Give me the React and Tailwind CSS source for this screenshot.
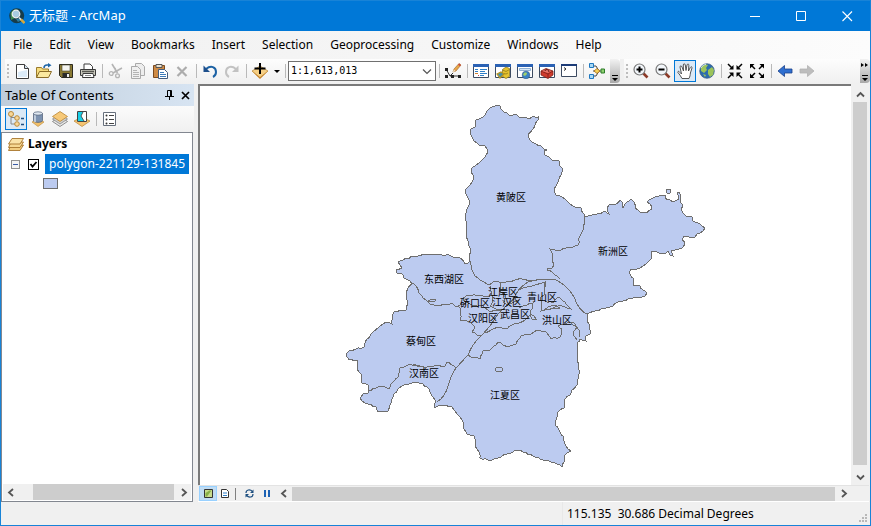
import React, { useState } from 'react';
import { clsx } from 'clsx';

const menuItems = [
  'File', 'Edit', 'View', 'Bookmarks', 'Insert', 'Selection',
  'Geoprocessing', 'Customize', 'Windows', 'Help',
];

const scales = ['1:1,613,013', '1:1,000,000', '1:500,000', '1:100,000', '1:24,000'];

// Outer boundary of all the districts, clockwise from the northern tip
const outline = [
  [497, 105], [500, 106], [501, 109], [504, 112], [507, 113], [509, 115], [512, 116], [514, 114],
  [517, 115], [519, 117], [527, 118], [538, 117], [538, 120], [535, 125], [532, 130], [528, 134],
  [529, 138], [532, 142], [536, 144], [541, 146], [544, 149], [547, 150], [544, 151], [545, 155],
  [549, 157], [552, 160], [559, 161], [560, 166], [563, 169], [561, 175], [557, 184], [554, 189],
  [556, 195], [562, 197], [567, 201], [570, 204], [575, 207], [581, 208], [584, 214], [585, 217],
  [592, 215], [600, 214], [605, 211], [609, 214], [607, 208], [609, 205], [616, 204], [620, 200],
  [622, 202], [623, 208], [627, 202], [631, 199], [634, 202], [635, 208], [640, 212], [647, 213],
  [652, 209], [650, 204], [647, 202], [653, 198], [662, 195], [666, 195], [665, 198], [670, 200],
  [673, 202], [677, 200], [679, 199], [677, 192], [679, 192], [681, 196], [680, 202], [683, 206],
  [681, 209], [683, 213], [687, 217], [692, 217], [693, 221], [700, 224], [705, 228], [703, 231],
  [697, 234], [693, 238], [684, 236], [682, 240], [685, 242], [682, 248], [675, 250], [671, 251],
  [673, 256], [670, 255], [668, 251], [663, 254], [657, 252], [652, 251], [651, 259], [646, 264],
  [640, 268], [631, 269], [630, 274], [634, 279], [634, 286], [640, 286], [643, 290], [647, 293],
  [645, 296], [633, 298], [620, 301], [610, 307], [595, 311], [587, 314], [587, 319], [590, 325],
  [590, 334], [586, 336], [586, 341], [580, 339], [577, 343], [578, 350], [577, 360], [579, 370],
  [578, 384], [572, 390], [570, 395], [565, 399], [564, 408], [558, 412], [555, 425], [560, 432],
  [564, 437], [566, 446], [571, 451], [567, 453], [564, 456], [564, 462], [562, 467], [557, 464],
  [551, 462], [543, 460], [533, 456], [523, 452], [518, 450], [507, 454], [498, 458], [488, 460],
  [480, 458], [479, 452], [475, 446], [474, 436], [467, 434], [463, 428], [463, 422], [457, 414],
  [452, 407], [444, 405], [438, 406], [434, 408], [434, 404], [436, 402], [432, 396], [429, 389],
  [423, 384], [414, 382], [404, 385], [398, 389], [393, 397], [390, 405], [388, 411], [378, 412],
  [376, 407], [365, 403], [360, 398], [363, 394], [368, 393], [368, 385], [362, 383], [361, 374],
  [357, 368], [358, 361], [349, 360], [346, 356], [350, 350], [364, 347], [367, 339], [372, 333],
  [380, 326], [386, 322], [392, 324], [392, 316], [395, 311], [406, 310], [408, 303], [406, 296],
  [408, 288], [412, 284], [410, 281], [404, 278], [401, 273], [397, 273], [396, 270], [402, 268],
  [398, 262], [403, 260], [414, 256], [430, 254], [446, 255], [460, 258], [465, 264], [470, 261],
  [469, 256], [470, 248], [468, 244], [467, 233], [466, 221], [465, 214], [467, 209], [470, 204],
  [467, 196], [465, 190], [469, 186], [473, 180], [473, 175], [471, 169], [479, 163], [485, 157],
  [488, 151], [485, 146], [479, 145], [474, 141], [471, 135], [470, 130], [475, 127], [476, 120],
  [481, 118], [485, 115], [487, 111], [490, 108],
];

// Borders between the districts
const borders = [
  [[585, 217], [583, 230], [580, 236], [578, 245], [573, 247], [566, 248], [560, 251], [555, 250], [550, 249], [552, 253], [552, 260], [554, 265], [551, 269], [547, 268], [547, 270], [553, 273], [560, 279]],
  [[470, 261], [472, 270], [475, 276], [480, 280], [488, 285], [495, 281], [501, 283], [511, 282], [520, 278], [528, 281], [537, 280]],
  [[410, 281], [416, 286], [419, 293], [426, 300], [430, 304], [437, 306], [450, 304], [458, 306], [466, 304], [463, 298], [468, 295], [480, 295], [488, 297], [492, 295], [490, 286]],
  [[428, 301], [432, 299], [436, 300], [434, 302], [428, 302]],
  [[458, 306], [461, 311], [460, 320], [470, 322], [475, 327], [472, 332], [477, 335], [482, 335]],
  [[463, 300], [472, 305], [483, 306], [490, 312], [500, 310], [505, 308]],
  [[492, 295], [493, 301], [490, 306], [496, 309], [502, 311]],
  [[501, 283], [499, 291], [506, 295], [504, 303], [508, 306]],
  [[484, 333], [493, 329], [500, 327], [507, 329], [512, 325], [517, 324], [525, 320], [530, 315], [532, 319], [536, 319], [534, 316], [530, 314], [532, 309], [533, 303], [527, 305], [519, 308]],
  [[468, 355], [474, 358], [480, 359], [483, 351], [490, 350], [498, 342], [508, 347], [516, 344], [521, 336], [531, 334], [537, 330], [545, 331], [551, 339], [560, 337], [562, 329], [558, 326], [570, 322], [573, 325], [577, 327], [573, 333], [577, 340]],
  [[368, 391], [376, 388], [380, 386], [385, 387], [389, 389], [391, 384], [394, 381], [398, 377], [400, 368], [408, 365], [417, 365], [425, 368], [430, 366], [445, 366], [447, 362], [456, 368]],
  [[412, 366], [415, 364], [418, 367], [423, 366], [426, 369]],
  [[545, 283], [544, 295], [541, 297], [541, 311], [550, 309], [560, 305], [565, 307], [571, 309], [565, 302], [558, 297], [553, 303], [545, 301]],
  [[542, 311], [548, 307], [556, 305], [560, 308], [555, 309], [548, 310]],
  [[569, 323], [573, 322], [576, 326], [580, 331], [580, 337]],
];

// The Yangtze and the expressway keep smooth lines
const rivers = [
  'M437 402Q445 397 448 386T456 368L468 355Q472 344 482 335L490 326L498 314L505 307L513 300Q518 288 528 282Q540 278 556 280Q568 286 574 297Q579 311 587 314',
  'M518 290Q524 287 532 286L545 282L545 287',
  'M505 307Q511 300 518 297M498 314L507 305L519 300',
];

const districts = [
  { name: '黄陂区', x: 511, y: 201 },
  { name: '新洲区', x: 613, y: 255 },
  { name: '东西湖区', x: 444, y: 283 },
  { name: '江岸区', x: 503, y: 296 },
  { name: '硚口区', x: 475, y: 307 },
  { name: '江汉区', x: 507, y: 306 },
  { name: '青山区', x: 542, y: 301 },
  { name: '汉阳区', x: 483, y: 322 },
  { name: '武昌区', x: 515, y: 318 },
  { name: '洪山区', x: 557, y: 324 },
  { name: '蔡甸区', x: 421, y: 345 },
  { name: '汉南区', x: 424, y: 377 },
  { name: '江夏区', x: 505, y: 399 },
];

const noise = (n) => {
  const s = Math.sin(n * 127.1) * 43758.5453;
  return (s - Math.floor(s)) * 2 - 1;
};

// Breaks each straight run into short pieces so it reads like a surveyed border
const roughPath = (points, closed) => {
  const list = closed ? [...points, points[0]] : points;
  let d = `M${list[0][0]} ${list[0][1]}`;
  for (let i = 1; i < list.length; i++) {
    const [x1, y1] = list[i - 1];
    const [x2, y2] = list[i];
    const length = Math.hypot(x2 - x1, y2 - y1);
    const steps = Math.max(1, Math.round(length / 3));
    for (let k = 1; k < steps; k++) {
      const t = k / steps;
      const off = noise(x1 * 3 + y1 * 7 + k) * 0.8;
      const x = x1 + (x2 - x1) * t - ((y2 - y1) / length) * off;
      const y = y1 + (y2 - y1) * t + ((x2 - x1) / length) * off;
      d += `L${x.toFixed(1)} ${y.toFixed(1)}`;
    }
    d += `L${x2} ${y2}`;
  }
  return closed ? d + 'Z' : d;
};

const Svg = ({ children, className = 'size-4' }) => (
  <svg viewBox="0 0 16 16" className={clsx('shrink-0', className)} fill="none" aria-hidden="true">
    {children}
  </svg>
);

const icons = {
  new: (
    <Svg>
      <path d="M2.5 1.5h8l4 4v10h-12z" fill="#fff" stroke="#3c3c3c" />
      <path d="M4 9l9-2v7H4z" fill="#dcebf8" />
      <path d="M10.500 1.500v4h4" fill="#d4e3f0" stroke="#3c3c3c" />
    </Svg>
  ),
  open: (
    <Svg>
      <path d="M.5 14.500v-10h5l1 1.500h6v3" fill="#f6dc7c" stroke="#9a7a2c" />
      <path d="M.5 14.500l3-6h12l-3 6z" fill="#fbe9a0" stroke="#8a6c28" />
      <path d="M8 5c0-2 1-3 3-3h2" stroke="#1d64a8" strokeWidth="1.500" />
      <path d="M12 0l3.500 2.300L12 4.600z" fill="#1d64a8" />
    </Svg>
  ),
  save: (
    <Svg>
      <path d="M1.500 1.500h13v13h-11l-2-2z" fill="#8a7a34" stroke="#2c2a20" />
      <path d="M4 2h8v6H4z" fill="#f4f4f0" stroke="#4a4630" strokeWidth=".6" />
      <path d="M4.500 10h7v4.500h-7z" fill="#2b2b2b" />
      <path d="M9 11h2v3H9z" fill="#eee" />
    </Svg>
  ),
  print: (
    <Svg>
      <path d="M4 6V1h6l2.500 2.500V6" fill="#fff" stroke="#3c3c3c" />
      <path d="M.5 6.500h15v6H.5z" fill="#c9c9bd" stroke="#3a3a3a" />
      <path d="M2 8.500h12" stroke="#565650" strokeWidth="1.500" />
      <path d="M3 10.500h10l1 4H2.500z" fill="#fff" stroke="#3a3a3a" />
      <path d="M5 12.500h6" stroke="#888" />
    </Svg>
  ),
  cut: (
    <Svg>
      <path d="M4 1l5.500 9M14 5L5 10M7 5l1 4" stroke="#b4b4b4" strokeWidth="1.600" />
      <circle cx="3.200" cy="10.500" r="1.900" stroke="#b4b4b4" strokeWidth="1.300" />
      <circle cx="9.500" cy="12.700" r="1.900" stroke="#b4b4b4" strokeWidth="1.300" />
    </Svg>
  ),
  copy: (
    <Svg>
      <path d="M5.500.5h6l3 3v9h-9z" fill="#ededed" stroke="#aaa" />
      <path d="M1.500 3.500h6l3 3v9h-9z" fill="#f0f0f0" stroke="#aaa" />
      <path d="M3 7.500h4M3 9.500h6M3 11.500h6M3 13.500h6" stroke="#b4b4b4" />
    </Svg>
  ),
  paste: (
    <Svg>
      <path d="M1.500 2.500h11v12h-11z" fill="#cf8b45" stroke="#7a4a20" />
      <path d="M4 1.500h6v3H4z" fill="#e8e0d0" stroke="#555" />
      <path d="M6.500 6.500h6l3 3v6h-9z" fill="#fff" stroke="#445c7c" />
      <path d="M8 9.500h4M8 11.500h6M8 13.500h6" stroke="#3d7ab8" />
    </Svg>
  ),
  remove: (
    <Svg>
      <path d="M3.500 4l9 9M12.500 4l-9 9" stroke="#acacac" strokeWidth="2.200" />
    </Svg>
  ),
  undo: (
    <Svg>
      <path d="M4 6c5-4 10-2 10 3 0 2-1 4-3 5" stroke="#1d62a4" strokeWidth="2" />
      <path d="M1.500 2.500v6.500h6.500z" fill="#1d4f8c" />
    </Svg>
  ),
  redo: (
    <Svg>
      <path d="M12 6C7 2 2 4 2 9c0 2 1 4 3 5" stroke="#c2c2c2" strokeWidth="2" />
      <path d="M14.500 2.500v6.500H8z" fill="#c2c2c2" />
    </Svg>
  ),
  addData: (
    <Svg>
      <path d="M0 8l8-5 8 5-8 7z" fill="#f5cf85" stroke="#b98534" strokeWidth=".7" />
      <path d="M0 8l8 6 8-6-8 8z" fill="#c8862c" />
      <path d="M8 0v11M2.500 5.500h11" stroke="#000" strokeWidth="2" />
    </Svg>
  ),
  editor: (
    <Svg className="h-4 w-4.5">
      <path d="M1 6l4 7h10M5 13l3-3" stroke="#333" />
      <path d="M0 5h3v3H0zM0 12h3v3H0zM6 12h3v3H6zM13 12h3v3h-3z" fill="#222" />
      <path d="M8 9l1-3 5-5.500L16 2l-5 6z" fill="#e8a648" stroke="#99632a" strokeWidth=".6" />
      <path d="M14 .5L16 2l-1 1.300-2-1.500z" fill="#c94a3c" />
      <path d="M7.500 9.500L9 6.500l1.500 1.500z" fill="#f2dfc2" />
    </Svg>
  ),
  table: (
    <Svg>
      <path d="M.5 1.500h15v13H.5z" fill="#fff" stroke="#3c4a60" />
      <path d="M0 1h16v3H0z" fill="#2b62b4" />
      <path d="M2 6.500h3M7 6.500h7M2 8.500h3M7 8.500h5M7 10.500h7M7 12.500h4" stroke="#2f7fc8" />
      <path d="M2 10.500h3" stroke="#d08030" />
      <path d="M5 12.500h1" stroke="#c44" />
    </Svg>
  ),
  catalog: (
    <Svg>
      <path d="M.5 1.500h15v13H.5z" fill="#fff" stroke="#3c4a60" />
      <path d="M0 1h16v3H0z" fill="#2b62b4" />
      <path d="M7.500 6.500l3.500-2.500 3.500 1.500v8L11 15.500l-3.500-2z" fill="#e6c42e" stroke="#86701a" strokeWidth=".7" />
      <path d="M7.500 7l3.500 1.500 3.500-2M9 10.500l2 .5 2-1" stroke="#86701a" strokeWidth=".7" />
      <path d="M2 11l4-2 3 2-4 4z" fill="#4a90a8" stroke="#b8941c" strokeWidth="1.200" />
    </Svg>
  ),
  search: (
    <Svg>
      <path d="M.5 1.500h15v13H.5z" fill="#fff" stroke="#3c4a60" />
      <path d="M0 1h16v3H0z" fill="#2b62b4" />
      <path d="M2.500 5.500h11v2h-11z" fill="#d8e8f8" stroke="#7aa0c8" strokeWidth=".8" />
      <circle cx="9" cy="12" r="3.800" fill="#3a82c4" stroke="#2c5484" strokeWidth=".6" />
      <path d="M7 10c2-1 3 0 3 1l-2 2-2-1z" fill="#9fd06c" />
    </Svg>
  ),
  toolbox: (
    <Svg>
      <path d="M.5 1.500h15v13H.5z" fill="#fff" stroke="#3c4a60" />
      <path d="M0 1h16v3H0z" fill="#2b62b4" />
      <path d="M2 8l5-2.500 7 2.500v4l-5 3.500L2 12z" fill="#cf3a2c" stroke="#7c2018" strokeWidth=".8" />
      <path d="M2 8l7 3 5-3M9 11v4" stroke="#7c2018" strokeWidth=".8" />
      <path d="M3 8l4-1.800 5.500 1.800L9 10z" fill="#e8756a" />
      <path d="M6 8c0-2 4-2 4 1" stroke="#551410" />
    </Svg>
  ),
  python: (
    <Svg>
      <path d="M.5 1.500h15v12H.5z" fill="#fff" stroke="#3c4a60" />
      <path d="M0 1h16v2H0z" fill="#1d3c78" />
      <path d="M3 4.500l2 1.500-2 1.500" stroke="#222" />
    </Svg>
  ),
  model: (
    <Svg>
      <path d="M4 3h3l3 5M4 8h8M4 13h3l3-5" stroke="#444" />
      <path d="M.5.5h4v4h-4zM.5 11.500h4v4h-4z" fill="#a8d8f4" stroke="#1f78c0" />
      <path d="M5 8l3-2.500L11 8l-3 2.500z" fill="#f7d354" stroke="#a5681c" strokeWidth=".8" />
      <path d="M12 6h3.500v4H12z" fill="#8ed070" stroke="#2c7c28" />
    </Svg>
  ),
  zoomIn: (
    <Svg>
      <path d="M9.500 9.500l5 5" stroke="#8c3a28" strokeWidth="2.600" />
      <circle cx="6.500" cy="6.500" r="5.500" fill="#f2f6fa" stroke="#7a7a7a" strokeWidth="1.200" />
      <path d="M6.500 3.500v6M3.500 6.500h6" stroke="#000" strokeWidth="2" />
    </Svg>
  ),
  zoomOut: (
    <Svg>
      <path d="M9.500 9.500l5 5" stroke="#8c3a28" strokeWidth="2.600" />
      <circle cx="6.500" cy="6.500" r="5.500" fill="#f2f6fa" stroke="#7a7a7a" strokeWidth="1.200" />
      <path d="M3.500 6.500h6" stroke="#000" strokeWidth="2" />
    </Svg>
  ),
  pan: (
    <Svg>
      <path
        d="M5 15.500C4 13 2 11 .8 9.300c0-1.300 1.200-1.300 2 0L4.500 11 3 4c0-1.500 1.500-1.500 2 0l1.500 4L6.300 2c0-1.600 1.700-1.600 2 0L9 7.500 10 2c.4-1.400 2-1.200 1.800.3L11.500 8l1.800-3.500c.7-1.300 2-.7 1.700.5l-1.600 5c-.2 2-.4 3.500-1.400 5.500z"
        fill="#fff"
        stroke="#444"
        strokeWidth=".9"
      />
    </Svg>
  ),
  globe: (
    <Svg>
      <circle cx="8" cy="8" r="7.300" fill="#2d6cae" stroke="#3c5c84" strokeWidth=".7" />
      <path d="M2 4c3-3 6-3 7-2L7 5l1 2-3 3-3-2zM9 7l4-3 2 3-1 5-3 2-2-3zM4 11l3 1-1 2z" fill="#9cc45a" />
      <path d="M2 5c1-2 3-3.500 5-3.500" stroke="#cfe3f4" />
    </Svg>
  ),
  shrink: (
    <Svg>
      <path d="M1 1l4 4M15 1l-4 4M1 15l4-4M15 15l-4-4" stroke="#000" strokeWidth="1.500" />
      <path d="M6.500 6.500H2l4.500-4.500zM9.500 6.500H14L9.500 2zM6.500 9.500H2l4.500 4.500zM9.500 9.500H14L9.500 14z" fill="#000" />
    </Svg>
  ),
  grow: (
    <Svg>
      <path d="M2 2l4 4M14 2l-4 4M2 14l4-4M14 14l-4-4" stroke="#000" strokeWidth="1.500" />
      <path d="M1 1h4.500L1 5.500zM15 1h-4.500L15 5.500zM1 15h4.500L1 10.500zM15 15h-4.500l4.500-4.500z" fill="#000" />
    </Svg>
  ),
  back: (
    <Svg>
      <path d="M1 8l6.500-5.500V6H15v4H7.500v3.500z" fill="#2f6fd0" stroke="#1b3f88" strokeWidth=".8" />
    </Svg>
  ),
  forward: (
    <Svg>
      <path d="M15 8L8.500 2.500V6H1v4h7.500v3.500z" fill="#bdbdbd" stroke="#b2b2b2" strokeWidth=".8" />
    </Svg>
  ),
  drawingOrder: (
    <Svg>
      <path d="M3 4v9h5M3 6.500h6" stroke="#888" />
      <circle cx="3" cy="3" r="2.500" fill="#f7d79a" stroke="#b98a3c" />
      <circle cx="9" cy="7" r="2.300" fill="#f7d79a" stroke="#b98a3c" />
      <circle cx="9" cy="13" r="2.300" fill="#f7d79a" stroke="#b98a3c" />
      <path d="M13 7.500h3M13 13.500h3" stroke="#1f4e80" strokeWidth="1.500" />
    </Svg>
  ),
  source: (
    <Svg>
      <path d="M2 11l6 4.500 6-4.500-6-3z" fill="#f2c069" stroke="#b98534" strokeWidth=".6" />
      <path d="M3.500 2.500v7c0 2.500 9 2.500 9 0v-7z" fill="#7c92b0" stroke="#4c5c74" strokeWidth=".7" />
      <path d="M5 4v7" stroke="#d4deea" strokeWidth="1.500" />
      <ellipse cx="8" cy="2.500" rx="4.500" ry="1.700" fill="#dfe7f0" stroke="#4c5c74" strokeWidth=".7" />
    </Svg>
  ),
  visibility: (
    <Svg>
      <path d="M.5 10.500L8 15.500l7.500-5L8 5z" fill="#e8e8e8" stroke="#777" strokeWidth=".8" />
      <path d="M.5 8L8 13l7.500-5L8 3z" fill="#cfcfcf" stroke="#888" strokeWidth=".8" />
      <path d="M.5 5.500L8 10.500l7.500-5L8 .5z" fill="#f7c978" stroke="#b98534" strokeWidth=".8" />
    </Svg>
  ),
  selection: (
    <Svg>
      <path d="M0 10l8 5.500 8-5.500-8-4z" fill="#f5c572" stroke="#b98534" strokeWidth=".7" />
      <path d="M3.500.5h9v10h-9z" fill="#fff" stroke="#444" />
      <path d="M4 1h5L7 5l3 5H4z" fill="#19cfe6" />
      <path d="M9 1L7 5l3 5" stroke="#333" strokeWidth=".8" />
    </Svg>
  ),
  options: (
    <Svg>
      <path d="M1.500 1.500h12v13h-12z" fill="#fff" stroke="#666f7c" />
      <path d="M7 4.500h5M7 8.500h5M7 12.500h5" stroke="#444" />
      <circle cx="4.500" cy="4.500" r="1" fill="#333" />
      <circle cx="4.500" cy="8.500" r="1" fill="#333" />
      <circle cx="4.500" cy="12.500" r="1" fill="#333" />
    </Svg>
  ),
  layers: (
    <Svg>
      <path d="M3 9h12.500L12 14.500H.5z" fill="#f2cd80" stroke="#a8762c" strokeWidth=".9" />
      <path d="M3 6h12.500L12 11.500H.5z" fill="#f6d892" stroke="#a8762c" strokeWidth=".9" />
      <path d="M4 2.500h11.500L12 8H.5z" fill="#fae3a8" stroke="#a8762c" strokeWidth=".9" />
    </Svg>
  ),
  appLogo: (
    <Svg>
      <circle cx="7.700" cy="7.700" r="7.500" fill="#173c4a" />
      <path d="M1.500 5c2-4 6-4 8-3L6 10l-4 2z" fill="#3f8a50" />
      <path d="M7 11l5-1 1 2-4 2z" fill="#2c7a9c" />
      <path d="M10 9.500l3 3" stroke="#e8e8e8" strokeWidth="1.500" />
      <path d="M12 11.500l3.500 3.500" stroke="#d6a83c" strokeWidth="2.500" />
      <circle cx="7" cy="6" r="3.800" fill="#a8cce0" stroke="#f0f0f0" strokeWidth="1.200" />
    </Svg>
  ),
};

const ToolButton = ({ icon, label, active, onClick }) => (
  <button
    type="button"
    title={label}
    aria-label={label}
    onClick={onClick}
    className={clsx(
      'flex size-5.5 shrink-0 items-center justify-center border',
      active ? 'border-[#0078d7] bg-[#dbe9f6]' : 'border-transparent hover:bg-[#dbe9f6]'
    )}
  >
    {icons[icon]}
  </button>
);

const Separator = () => (
  <div className="flex w-1.5 shrink-0 justify-center">
    <div className="h-3.5 w-px bg-[#b9b9b9]" />
  </div>
);

const Grip = () => (
  <div className="flex w-1.5 shrink-0 flex-col items-center gap-0.5">
    {[0, 1, 2, 3].map((dot) => (
      <span key={dot} className="size-0.5 bg-[#bdbdbd]" />
    ))}
  </div>
);

const Overflow = ({ more }) => (
  <button
    type="button"
    aria-label="Toolbar options"
    className="flex h-full w-2.5 shrink-0 flex-col items-center justify-end rounded-r-sm bg-linear-to-b from-[#f2f2f2] to-[#a9a9a9]"
  >
    <svg viewBox="0 0 10 22" className="h-5.5 w-2.5" aria-hidden="true">
      {more && <path d="M1 2l3 2-3 2zM5 2l3 2-3 2z" fill="#000" />}
      <path d="M2 14h6v1H2zM2 17h6l-3 3z" fill="#000" />
    </svg>
  </button>
);

const chevrons = {
  left: 'M6 1L2 4.500L6 8',
  right: 'M3 1l4 3.500L3 8',
  up: 'M1 6.500L4.500 3L8 6.500',
  down: 'M1 2.500L4.500 6L8 2.500',
};

const ScrollButton = ({ dir }) => (
  <button
    type="button"
    aria-label={`Scroll ${dir}`}
    className="flex size-4 shrink-0 items-center justify-center hover:bg-[#dadada]"
  >
    <svg viewBox="0 0 9 9" className="size-2.25" fill="none" aria-hidden="true">
      <path d={chevrons[dir]} stroke="#555" strokeWidth="1.800" />
    </svg>
  </button>
);

const TitleBar = () => (
  <header className="flex h-7.5 shrink-0 items-center bg-[#0078d7] pl-2 text-white">
    {icons.appLogo}
    <h1 className="ml-1 text-[13px]">无标题 - ArcMap</h1>
    <div className="ml-auto flex h-full">
      <button type="button" aria-label="Minimize" className="flex w-11.5 items-center justify-center hover:bg-white/20">
        <svg viewBox="0 0 11 11" className="size-2.75" aria-hidden="true">
          <path d="M0 5h10v1H0z" fill="#fff" />
        </svg>
      </button>
      <button type="button" aria-label="Maximize" className="flex w-11.5 items-center justify-center hover:bg-white/20">
        <svg viewBox="0 0 11 11" className="size-2.75" fill="none" aria-hidden="true">
          <path d="M.5.5h9v9h-9z" stroke="#fff" />
        </svg>
      </button>
      <button type="button" aria-label="Close" className="flex w-11.5 items-center justify-center hover:bg-red-600">
        <svg viewBox="0 0 11 11" className="size-2.75" fill="none" aria-hidden="true">
          <path d="M.5.5l9.500 9.500M10 .5L.5 10" stroke="#fff" strokeWidth="1.100" />
        </svg>
      </button>
    </div>
  </header>
);

const MenuBar = () => (
  <nav className="flex h-7 shrink-0 items-center gap-px bg-linear-to-r from-[#f0f0f0] to-[#fcfcfc] pl-1">
    {menuItems.map((item) => (
      <button key={item} type="button" className="px-2 text-[12px] hover:bg-[#cce4f7]">
        {item}
      </button>
    ))}
  </nav>
);

const ToolBars = ({ tool, setTool }) => {
  const [scale, setScale] = useState(scales[0]);

  return (
    <div className="flex h-6.25 shrink-0 items-start justify-between bg-[#f0f0f0] pl-1">
      <div className="flex h-6 items-center bg-linear-to-b from-[#fdfdfd] to-[#f0f0f0]">
        <Grip />
        <ToolButton icon="new" label="New" />
        <ToolButton icon="open" label="Open" />
        <ToolButton icon="save" label="Save" />
        <ToolButton icon="print" label="Print" />
        <Separator />
        <ToolButton icon="cut" label="Cut" />
        <ToolButton icon="copy" label="Copy" />
        <ToolButton icon="paste" label="Paste" />
        <ToolButton icon="remove" label="Delete" />
        <Separator />
        <ToolButton icon="undo" label="Undo" />
        <ToolButton icon="redo" label="Redo" />
        <Separator />
        <ToolButton icon="addData" label="Add Data" />
        <button type="button" aria-label="Add Data options" className="flex w-2.75 justify-center">
          <svg viewBox="0 0 6 3" className="h-0.75 w-1.5" aria-hidden="true">
            <path d="M0 0h6L3 3z" fill="#000" />
          </svg>
        </button>
        <Separator />
        <div className="relative flex">
          <select
            aria-label="Map Scale"
            value={scale}
            onChange={(e) => setScale(e.target.value)}
            className="h-5 w-37 appearance-none border border-[#707070] bg-white pl-0.5 font-['DejaVu_Sans_Mono',monospace] text-[10px] leading-none outline-none"
          >
            {scales.map((item) => (
              <option key={item}>{item}</option>
            ))}
          </select>
          <svg viewBox="0 0 10 6" className="pointer-events-none absolute top-2 right-1 h-1.5 w-2.5" fill="none" aria-hidden="true">
            <path d="M1 .5l4 4 4-4" stroke="#555" strokeWidth="1.200" />
          </svg>
        </div>
        <Separator />
        <ToolButton icon="editor" label="Editor Toolbar" />
        <Separator />
        <ToolButton icon="table" label="Table Of Contents" />
        <ToolButton icon="catalog" label="Catalog" />
        <ToolButton icon="search" label="Search" />
        <ToolButton icon="toolbox" label="ArcToolbox" />
        <ToolButton icon="python" label="Python" />
        <Separator />
        <ToolButton icon="model" label="ModelBuilder" />
        <div className="ml-0.5 h-full">
          <Overflow />
        </div>
      </div>
      <div className="ml-1 flex h-6 grow items-center bg-linear-to-b from-[#fdfdfd] to-[#f0f0f0]">
        <Grip />
        <ToolButton icon="zoomIn" label="Zoom In" active={tool === 'zoomIn'} onClick={() => setTool('zoomIn')} />
        <ToolButton icon="zoomOut" label="Zoom Out" active={tool === 'zoomOut'} onClick={() => setTool('zoomOut')} />
        <ToolButton icon="pan" label="Pan" active={tool === 'pan'} onClick={() => setTool('pan')} />
        <ToolButton icon="globe" label="Full Extent" />
        <Separator />
        <ToolButton icon="shrink" label="Fixed Zoom In" />
        <ToolButton icon="grow" label="Fixed Zoom Out" />
        <Separator />
        <ToolButton icon="back" label="Back" />
        <ToolButton icon="forward" label="Forward" />
        <div className="ml-auto h-full">
          <Overflow more />
        </div>
      </div>
    </div>
  );
};

const TableOfContents = ({ visible, setVisible }) => (
  <aside className="flex w-48.25 shrink-0 flex-col">
    <div className="flex h-5.5 shrink-0 items-center bg-linear-to-r from-[#bfcddb] to-[#d7e4f2] pr-px pl-1 text-[12px]">
      <h2 className="text-[13px] leading-5.5">Table Of Contents</h2>
      <button type="button" aria-label="Auto hide" className="ml-auto flex w-4 justify-center">
        <svg viewBox="0 0 9 10" className="h-2.5 w-2.25" fill="none" aria-hidden="true">
          <path d="M2.500 6V.5h4V6M5.500 1v5M0 6.500h9M4.500 7v3" stroke="#000" />
        </svg>
      </button>
      <button type="button" aria-label="Close panel" className="flex w-4 justify-center">
        <svg viewBox="0 0 9 9" className="size-2.25" fill="none" aria-hidden="true">
          <path d="M1 1l7 7M8 1L1 8" stroke="#000" strokeWidth="1.700" />
        </svg>
      </button>
    </div>
    <div className="flex h-6.5 shrink-0 items-center bg-linear-to-b from-[#fbfbfb] to-[#f0f0f0] pl-1">
      <ToolButton icon="drawingOrder" label="List By Drawing Order" active />
      <ToolButton icon="source" label="List By Source" />
      <ToolButton icon="visibility" label="List By Visibility" />
      <ToolButton icon="selection" label="List By Selection" />
      <Separator />
      <ToolButton icon="options" label="Options" />
    </div>
    <div className="mr-px flex min-h-0 grow flex-col border border-[#828790] bg-white">
      <div className="grow overflow-hidden pt-px">
        <div className="flex h-5 items-center gap-1 pl-1.5">
          {icons.layers}
          <span className="text-[12px] font-bold">Layers</span>
        </div>
        <div className="flex h-5 items-center pl-2.25">
          <button
            type="button"
            aria-label="Collapse layer"
            className="flex size-2.25 shrink-0 items-center justify-center border border-[#919191] bg-[#f4f4f4]"
          >
            <span className="h-px w-1.25 bg-[#3a5ca8]" />
          </button>
          <label className="ml-2 flex items-center gap-1.5">
            <span className="relative flex size-2.75 shrink-0">
              <input
                type="checkbox"
                checked={visible}
                onChange={(e) => setVisible(e.target.checked)}
                className="size-2.75 appearance-none border border-black bg-white"
              />
              {visible && (
                <svg viewBox="0 0 11 11" className="pointer-events-none absolute inset-0" fill="none" aria-hidden="true">
                  <path d="M2.500 5l2 2.500 4-4.500" stroke="#000" strokeWidth="1.800" />
                </svg>
              )}
            </span>
            <span className="bg-[#0078d7] px-1 text-[12px] leading-5 whitespace-nowrap text-white">
              polygon-221129-131845
            </span>
          </label>
        </div>
        <div className="mt-1 ml-10.25 h-2.75 w-3.75 border border-[#6e6e6e] bg-[#bccbf0]" />
      </div>
      <div className="m-px flex h-4 shrink-0 items-center bg-[#f0f0f0]">
        <ScrollButton dir="left" />
        <div className="flex h-full grow pr-px pl-3.5">
          <div className="h-full grow bg-[#cdcdcd]" />
        </div>
        <ScrollButton dir="right" />
      </div>
    </div>
  </aside>
);

const DistrictMap = () => (
  <svg viewBox="200 86 651 399" className="size-full" aria-label="Wuhan districts">
    <g fill="#bccbf0" stroke="#6e6e6e" strokeWidth="1" shapeRendering="crispEdges">
      <path d={roughPath(outline, true)} />
      <path d="M666 190l3-1 2 1-1 3h-3z" />
      <g fill="none">
        {borders.map((line, i) => (
          <path key={i} d={roughPath(line)} />
        ))}
        {rivers.map((d) => (
          <path key={d} d={d} />
        ))}
        <path d="M495 369l2-2h4l2 2-1 2-3 1-3-1z" />
      </g>
    </g>
    <g
      fill="#000"
      textAnchor="middle"
      className="font-['Noto_Sans_CJK_SC',sans-serif] text-[10px]"
    >
      {districts.map(({ name, x, y }) => (
        <text key={name} x={x} y={y}>
          {name}
        </text>
      ))}
    </g>
  </svg>
);

const MapView = ({ visible }) => (
  <main className="flex min-w-0 grow flex-col">
    <div className="flex min-h-0 grow">
      <div className="min-w-0 grow border-t-2 border-l-2 border-[#7a7a7a] bg-white">
        <div className="size-full overflow-hidden">{visible && <DistrictMap />}</div>
      </div>
      <div className="flex w-4.5 shrink-0 flex-col items-center bg-[#f0f0f0] pt-0.5">
        <ScrollButton dir="up" />
        <div className="w-3.5 grow bg-[#cdcdcd]" />
        <div className="h-1 shrink-0" />
        <ScrollButton dir="down" />
      </div>
    </div>
    <div className="flex h-4.25 shrink-0 items-center border-t border-b border-t-[#e3e3e3] border-b-white bg-[#f0f0f0] pr-4.5">
      <button
        type="button"
        aria-label="Data View"
        className="ml-px flex h-full w-4.5 items-center justify-center border border-[#99d1ff] bg-[#c0dcf3]"
      >
        <svg viewBox="0 0 9 9" className="size-2.25" fill="none" aria-hidden="true">
          <path d="M.5.5h8v8h-8z" fill="#c8dc8c" stroke="#333" />
          <path d="M1.500 4l4-2.500h2L3 7.500H1.500z" fill="#88b048" />
        </svg>
      </button>
      <button type="button" aria-label="Layout View" className="flex h-full w-4 items-center justify-center">
        <svg viewBox="0 0 8 9" className="h-2.25 w-2" fill="none" aria-hidden="true">
          <path d="M.5.5h5l2 2v6h-7z" fill="#fff" stroke="#333" />
          <path d="M2 4h4M2 6.500h4" stroke="#2f7fc8" />
        </svg>
      </button>
      <div className="ml-0.5 h-3 w-px bg-[#808080]" />
      <button type="button" aria-label="Refresh" className="ml-1 flex h-full w-4.5 items-center justify-center">
        <svg viewBox="0 0 9 9" className="size-2.25" fill="none" aria-hidden="true">
          <path d="M1 4C1 .5 5 0 7.500 2.500M8 5C8 8.500 4 9 1.500 6.500" stroke="#1d4f80" strokeWidth="1.200" />
          <path d="M8.500 .5v3.500H5zM.5 8.500V5H4z" fill="#1d4f80" />
        </svg>
      </button>
      <button type="button" aria-label="Pause Drawing" className="flex h-full w-4.5 items-center justify-center">
        <svg viewBox="0 0 7 7" className="size-1.75" aria-hidden="true">
          <path d="M0 0h2v7H0zM4 0h2v7H4z" fill="#1d62b4" />
        </svg>
      </button>
      <ScrollButton dir="left" />
      <div className="h-3.5 grow bg-[#cdcdcd]" />
      <ScrollButton dir="right" />
    </div>
  </main>
);

const StatusBar = () => (
  <footer className="flex h-5.75 shrink-0 items-center bg-[#f0f0f0] text-[12px]">
    <div className="h-full w-36 grow border-r border-[#e8e8e8]" />
    <p className="w-74 pl-1 whitespace-pre">115.135  30.686 Decimal Degrees</p>
    <svg viewBox="0 0 9 9" className="mr-0.5 mb-0.5 size-2.25 self-end" aria-hidden="true">
      <path d="M6 0h2v2H6zM3 3h2v2H3zM6 3h2v2H6zM0 6h2v2H0zM3 6h2v2H3zM6 6h2v2H6z" fill="#b8b8b8" />
    </svg>
  </footer>
);

const App = () => {
  const [tool, setTool] = useState('pan');
  const [layerVisible, setLayerVisible] = useState(true);

  return (
    <div className="flex h-screen w-full flex-col overflow-hidden border border-[#1883d7] bg-[#f0f0f0] font-['Noto_Sans','Noto_Sans_CJK_SC',sans-serif] text-black">
      <TitleBar />
      <MenuBar />
      <ToolBars tool={tool} setTool={setTool} />
      <div className="flex min-h-0 grow gap-1 pr-px">
        <TableOfContents visible={layerVisible} setVisible={setLayerVisible} />
        <MapView visible={layerVisible} />
      </div>
      <StatusBar />
    </div>
  );
};

export default App;
